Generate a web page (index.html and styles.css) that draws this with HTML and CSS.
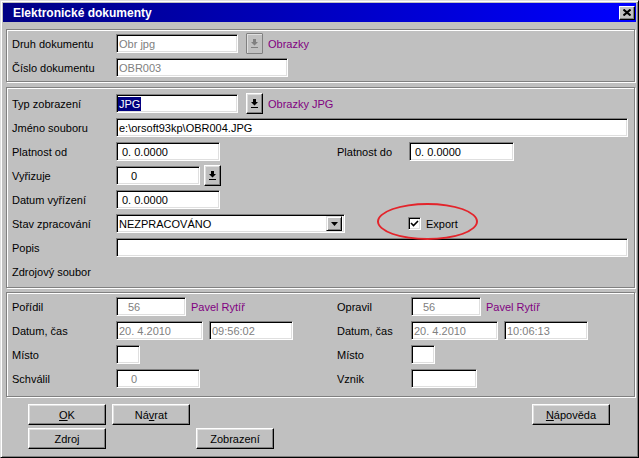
FILE: index.html
```html
<!DOCTYPE html>
<html lang="cs">
<head>
<meta charset="utf-8">
<title>Elektronické dokumenty</title>
<link rel="stylesheet" href="styles.css">
</head>
<body>
<div class="window">
  <div class="titlebar">
    <span class="title">Elektronické dokumenty</span>
    <span class="close"><svg width="8" height="7" viewBox="0 0 8 7"><path d="M0.5 0.5 L7.5 6.5 M7.5 0.5 L0.5 6.5" stroke="#000" stroke-width="2"/></svg></span>
  </div>
  <div class="content">
    <div class="group g1">
      <div class="row">
        <span class="label">Druh dokumentu</span>
        <span class="field dis w122">Obr jpg</span>
        <span class="pick off gap8"><svg width="7" height="9" viewBox="0 0 7 9"><path d="M2 0h3v3h2l-3.5 3.5L0 3h2z" fill="#808080"/><rect y="8" width="7" height="1" fill="#808080"/></svg></span>
        <span class="link">Obrazky</span>
      </div>
      <div class="row">
        <span class="label">Číslo dokumentu</span>
        <span class="field dis w172">OBR003</span>
      </div>
    </div>

    <div class="group g2">
      <div class="row">
        <span class="label">Typ zobrazení</span>
        <span class="field w122"><span class="sel">JPG</span></span>
        <span class="pick gap8"><svg width="7" height="9" viewBox="0 0 7 9"><path d="M2 0h3v3h2l-3.5 3.5L0 3h2z" fill="#000"/><rect y="8" width="7" height="1" fill="#000"/></svg></span>
        <span class="link">Obrazky JPG</span>
      </div>
      <div class="row">
        <span class="label">Jméno souboru</span>
        <span class="field w512">e:\orsoft93kp\OBR004.JPG</span>
      </div>
      <div class="row">
        <span class="label">Platnost od</span>
        <span class="left"><span class="field w104 pad4">0. 0.0000</span></span>
        <span class="rlabel r72">Platnost do</span>
        <span class="field w105 pad4">0. 0.0000</span>
      </div>
      <div class="row">
        <span class="label">Vyřizuje</span>
        <span class="field w84 pad13">0</span>
        <span class="pick gap4"><svg width="7" height="9" viewBox="0 0 7 9"><path d="M2 0h3v3h2l-3.5 3.5L0 3h2z" fill="#000"/><rect y="8" width="7" height="1" fill="#000"/></svg></span>
      </div>
      <div class="row">
        <span class="label">Datum vyřízení</span>
        <span class="field w104 pad4">0. 0.0000</span>
      </div>
      <div class="row">
        <span class="label">Stav zpracování</span>
        <span class="field combo w229">NEZPRACOVÁNO<span class="drop"><svg width="7" height="4" viewBox="0 0 7 4"><path d="M0 0h7l-3.5 4z" fill="#000"/></svg></span></span>
        <span class="export">
          <span class="check"><svg width="9" height="9" viewBox="0 0 9 9"><path d="M1 4 L3.5 6.5 L8 2" stroke="#000" stroke-width="1.6" fill="none"/></svg></span>
          <span class="checklabel">Export</span>
          <span class="ring"></span>
        </span>
      </div>
      <div class="row">
        <span class="label">Popis</span>
        <span class="field w512"></span>
      </div>
      <div class="row">
        <span class="label">Zdrojový soubor</span>
      </div>
    </div>

    <div class="group g3">
      <div class="row">
        <span class="label">Pořídil</span>
        <span class="left"><span class="field dis w70 pad10">56</span><span class="link gap6">Pavel Rytíř</span></span>
        <span class="rlabel r74">Opravil</span>
        <span class="field dis w70 pad10">56</span><span class="link gap6">Pavel Rytíř</span>
      </div>
      <div class="row">
        <span class="label">Datum, čas</span>
        <span class="left"><span class="field dis w87">20. 4.2010</span><span class="field dis w84 gap6">09:56:02</span></span>
        <span class="rlabel r74">Datum, čas</span>
        <span class="field dis w87">20. 4.2010</span><span class="field dis w84 gap6">10:06:13</span>
      </div>
      <div class="row">
        <span class="label">Místo</span>
        <span class="left"><span class="field w24"></span></span>
        <span class="rlabel r74">Místo</span>
        <span class="field w24"></span>
      </div>
      <div class="row">
        <span class="label">Schválil</span>
        <span class="left"><span class="field dis w84 pad13">0</span></span>
        <span class="rlabel r74">Vznik</span>
        <span class="field w66"></span>
      </div>
    </div>

    <div class="buttons">
      <button class="btn c1"><u>O</u>K</button>
      <button class="btn c2">Ná<u>v</u>rat</button>
      <button class="btn c7"><u>N</u>ápověda</button>
      <button class="btn c1">Zdroj</button>
      <button class="btn c3">Zobrazení</button>
    </div>
  </div>
</div>
</body>
</html>
```

FILE: styles.css
```css
body {
  margin: 0;
  font-family: "Liberation Sans", Arial, sans-serif;
  font-size: 11px;
  color: #000;
}

.window {
  box-sizing: border-box;
  width: 639px;
  height: 458px;
  background: #c0c0c0;
  border: 1px solid;
  border-color: #dfdfdf #000 #000 #dfdfdf;
  box-shadow: inset 1px 1px #fff, inset -1px -1px #808080;
  padding: 2px;
}

.titlebar {
  height: 19px;
  display: flex;
  align-items: center;
  padding-left: 10px;
  background: linear-gradient(to right, #000084, #0000ff);
  color: #fff;
  font-weight: bold;
  font-size: 12px;
}

.close {
  box-sizing: border-box;
  width: 16px;
  height: 14px;
  margin-left: auto;
  margin-right: 1px;
  display: flex;
  align-items: center;
  justify-content: center;
  background: #c0c0c0;
  border: 1px solid;
  border-color: #fff #000 #000 #fff;
  box-shadow: inset -1px -1px #808080;
}

.content {
  padding: 7px 1px 0 3px;
}

.group {
  border: 1px solid #808080;
  box-shadow: 1px 1px 0 #fff, inset 1px 1px 0 #fff;
  padding: 4px 5px 4px 5px;
  display: flex;
  flex-direction: column;
  gap: 5px;
}

.g2 {
  margin-top: 5px;
  padding-top: 6px;
  padding-bottom: 6px;
}

.g3 {
  margin-top: 4px;
  padding-bottom: 8px;
}

.row {
  height: 19px;
  display: flex;
  align-items: center;
}

.label {
  width: 104px;
  flex: none;
  white-space: nowrap;
}

.left {
  width: 221px;
  flex: none;
  display: flex;
  align-items: center;
}

.rlabel {
  flex: none;
  white-space: nowrap;
}

.r72 { width: 72px; }
.r74 { width: 74px; }

.field {
  box-sizing: border-box;
  height: 19px;
  flex: none;
  display: flex;
  align-items: center;
  background: #fff;
  border: 1px solid;
  border-color: #808080 #fff #fff #808080;
  box-shadow: inset 1px 1px #000, inset -1px -1px #dfdfdf;
  padding: 0 2px 0 2px;
  white-space: nowrap;
  overflow: hidden;
}

.dis { color: #808080; }

.w24 { width: 24px; }
.w66 { width: 66px; }
.w70 { width: 70px; }
.w84 { width: 84px; }
.w87 { width: 87px; }
.w104 { width: 104px; }
.w105 { width: 105px; }
.w122 { width: 122px; }
.w172 { width: 172px; }
.w229 { width: 229px; }
.w512 { width: 512px; }

.pad4 { padding-left: 5px; }
.pad10 { padding-left: 11px; }
.pad13 { padding-left: 14px; }

.gap4 { margin-left: 4px; }
.gap6 { margin-left: 6px; }
.gap8 { margin-left: 8px; }

.sel {
  background: #000080;
  color: #fff;
  margin-left: -1px;
  padding: 1px 1px;
}

.pick {
  box-sizing: border-box;
  width: 17px;
  height: 21px;
  flex: none;
  display: flex;
  align-items: center;
  justify-content: center;
  background: #c0c0c0;
  border: 1px solid;
  border-color: #fff #000 #000 #fff;
  box-shadow: inset -1px -1px #808080, inset 1px 1px #dfdfdf;
}

.pick.off {
  border-color: #808080;
  box-shadow: inset 1px 1px #dfdfdf;
  border-radius: 1px;
}

.link {
  color: #800080;
  margin-left: 5px;
  white-space: nowrap;
}

.combo {
  padding-right: 2px;
  justify-content: space-between;
}

.drop {
  box-sizing: border-box;
  width: 16px;
  height: 15px;
  display: flex;
  align-items: center;
  justify-content: center;
  background: #c0c0c0;
  border: 1px solid;
  border-color: #dfdfdf #000 #000 #dfdfdf;
  box-shadow: inset 1px 1px #fff, inset -1px -1px #808080;
}

.export {
  position: relative;
  margin-left: 63px;
  display: flex;
  align-items: center;
}

.check {
  box-sizing: border-box;
  width: 13px;
  height: 13px;
  display: flex;
  align-items: center;
  justify-content: center;
  background: #fff;
  border: 1px solid;
  border-color: #808080 #fff #fff #808080;
  box-shadow: inset 1px 1px #000, inset -1px -1px #dfdfdf;
}

.checklabel {
  margin-left: 5px;
}

.ring {
  position: absolute;
  left: -31px;
  top: -14px;
  width: 97px;
  height: 33px;
  border: 2px solid #e3242b;
  border-radius: 50%;
}

.buttons {
  margin-top: 7px;
  padding-left: 22px;
  display: grid;
  grid-template-columns: repeat(7, 78px);
  grid-auto-rows: 21px;
  column-gap: 6px;
  row-gap: 3px;
}

.btn {
  box-sizing: border-box;
  font-family: "Liberation Sans", Arial, sans-serif;
  font-size: 11px;
  color: #000;
  background: #c0c0c0;
  border: 1px solid;
  border-color: #fff #000 #000 #fff;
  box-shadow: inset -1px -1px #808080, inset 1px 1px #dfdfdf;
  padding: 0;
  margin: 0;
}

.c1 { grid-column: 1; }
.c2 { grid-column: 2; }
.c3 { grid-column: 3; }
.c7 { grid-column: 7; }
```
